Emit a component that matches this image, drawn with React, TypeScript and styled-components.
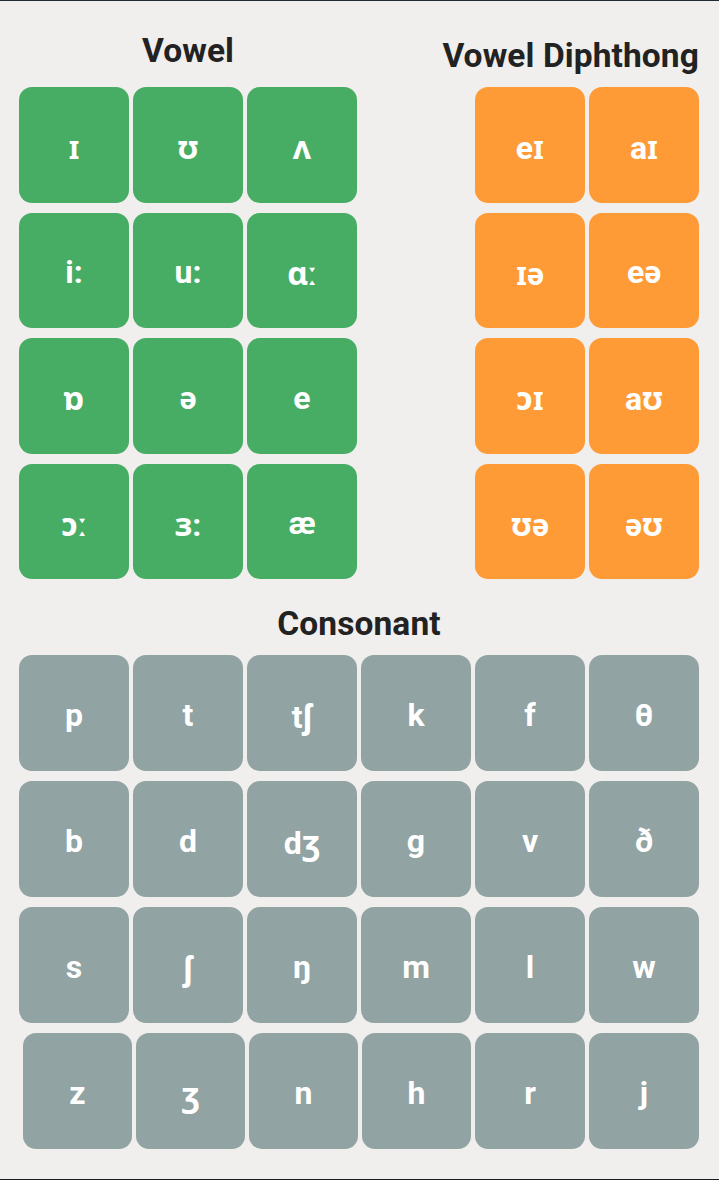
import React from "react";
import styled, { createGlobalStyle } from "styled-components";

const Global = createGlobalStyle`
  html, body { margin: 0; padding: 0; background: #f0efed; }
  body { font-family: Roboto, "Noto Sans", "DejaVu Sans", sans-serif; }
`;

const Page = styled.div`
  box-sizing: border-box;
  width: 719px;
  height: 1180px;
  border-top: 1px solid #1f2b33;
  border-bottom: 1px solid #1c1c1c;
  background: #f0efed;
  padding: 0 20px 0 19px;
  display: flex;
  flex-direction: column;
`;

const TopRow = styled.div`
  display: flex;
  justify-content: space-between;
  align-items: flex-start;
`;

const Group = styled.section<{ $offset?: number; $align?: string }>`
  display: flex;
  flex-direction: column;
  align-items: ${(p) => p.$align ?? "center"};
  padding-top: ${(p) => 31 + (p.$offset ?? 0)}px;
`;

const Title = styled.h2<{ $below: number }>`
  margin: 0 0 ${(p) => p.$below}px 0;
  font-family: Roboto, "Noto Sans", sans-serif;
  font-weight: 700;
  font-size: 33.5px;
  line-height: 38px;
  color: #222222;
  white-space: nowrap;
  letter-spacing: 0.1px;
`;

const Grid = styled.div<{ $cols: number }>`
  display: grid;
  grid-template-columns: repeat(${(p) => p.$cols}, 110px);
  column-gap: 4px;
  row-gap: 10px;
`;

const ConsonantSection = styled.section`
  display: flex;
  flex-direction: column;
  align-items: center;
  padding-top: 26px;
`;

const ConsonantRows = styled.div`
  display: flex;
  flex-direction: column;
  gap: 10px;
  align-self: stretch;
`;

const Row = styled.div`
  display: flex;
  justify-content: flex-end;
  gap: 4px;
`;

const Tile = styled.button<{ $bg: string; $h: number; $w?: number }>`
  box-sizing: border-box;
  width: ${(p) => p.$w ?? 110}px;
  height: ${(p) => p.$h}px;
  border: none;
  border-radius: 13px;
  background: ${(p) => p.$bg};
  color: #ffffff;
  font-family: Roboto, "Noto Sans", "DejaVu Sans", sans-serif;
  font-weight: 700;
  font-size: 32px;
  display: flex;
  align-items: center;
  justify-content: center;
  padding: 4px 0 0 0;
  cursor: pointer;
`;

const GREEN = "#48ad64";
const ORANGE = "#ff9b36";
const GRAY = "#91a3a2";

const vowels = ["ɪ", "ʊ", "ʌ", "i:", "u:", "ɑː", "ɒ", "ə", "e", "ɔː", "ɜ:", "æ"];
const diphthongs = ["eɪ", "aɪ", "ɪə", "eə", "ɔɪ", "aʊ", "ʊə", "əʊ"];
const consonants = [
  ["p", "t", "tʃ", "k", "f", "θ"],
  ["b", "d", "dʒ", "g", "v", "ð"],
  ["s", "ʃ", "ŋ", "m", "l", "w"],
  ["z", "ʒ", "n", "h", "r", "j"],
];

export default function App() {
  return (
    <Page>
      <Global />
      <TopRow>
        <Group>
          <Title $below={17}>Vowel</Title>
          <Grid $cols={3}>
            {vowels.map((v) => (
              <Tile key={v} $bg={GREEN} $h={115.5}>
                {v}
              </Tile>
            ))}
          </Grid>
        </Group>
        <Group $offset={5} $align="flex-end">
          <Title $below={12}>Vowel Diphthong</Title>
          <Grid $cols={2}>
            {diphthongs.map((v) => (
              <Tile key={v} $bg={ORANGE} $h={115.5}>
                {v}
              </Tile>
            ))}
          </Grid>
        </Group>
      </TopRow>
      <ConsonantSection>
        <Title $below={12}>Consonant</Title>
        <ConsonantRows>
          {consonants.map((row, ri) => (
            <Row key={ri}>
              {row.map((c, ci) => (
                <Tile
                  key={c}
                  $bg={GRAY}
                  $h={116}
                  $w={ri === 3 && ci < 4 ? 109 : 110}
                >
                  {c}
                </Tile>
              ))}
            </Row>
          ))}
        </ConsonantRows>
      </ConsonantSection>
    </Page>
  );
}
